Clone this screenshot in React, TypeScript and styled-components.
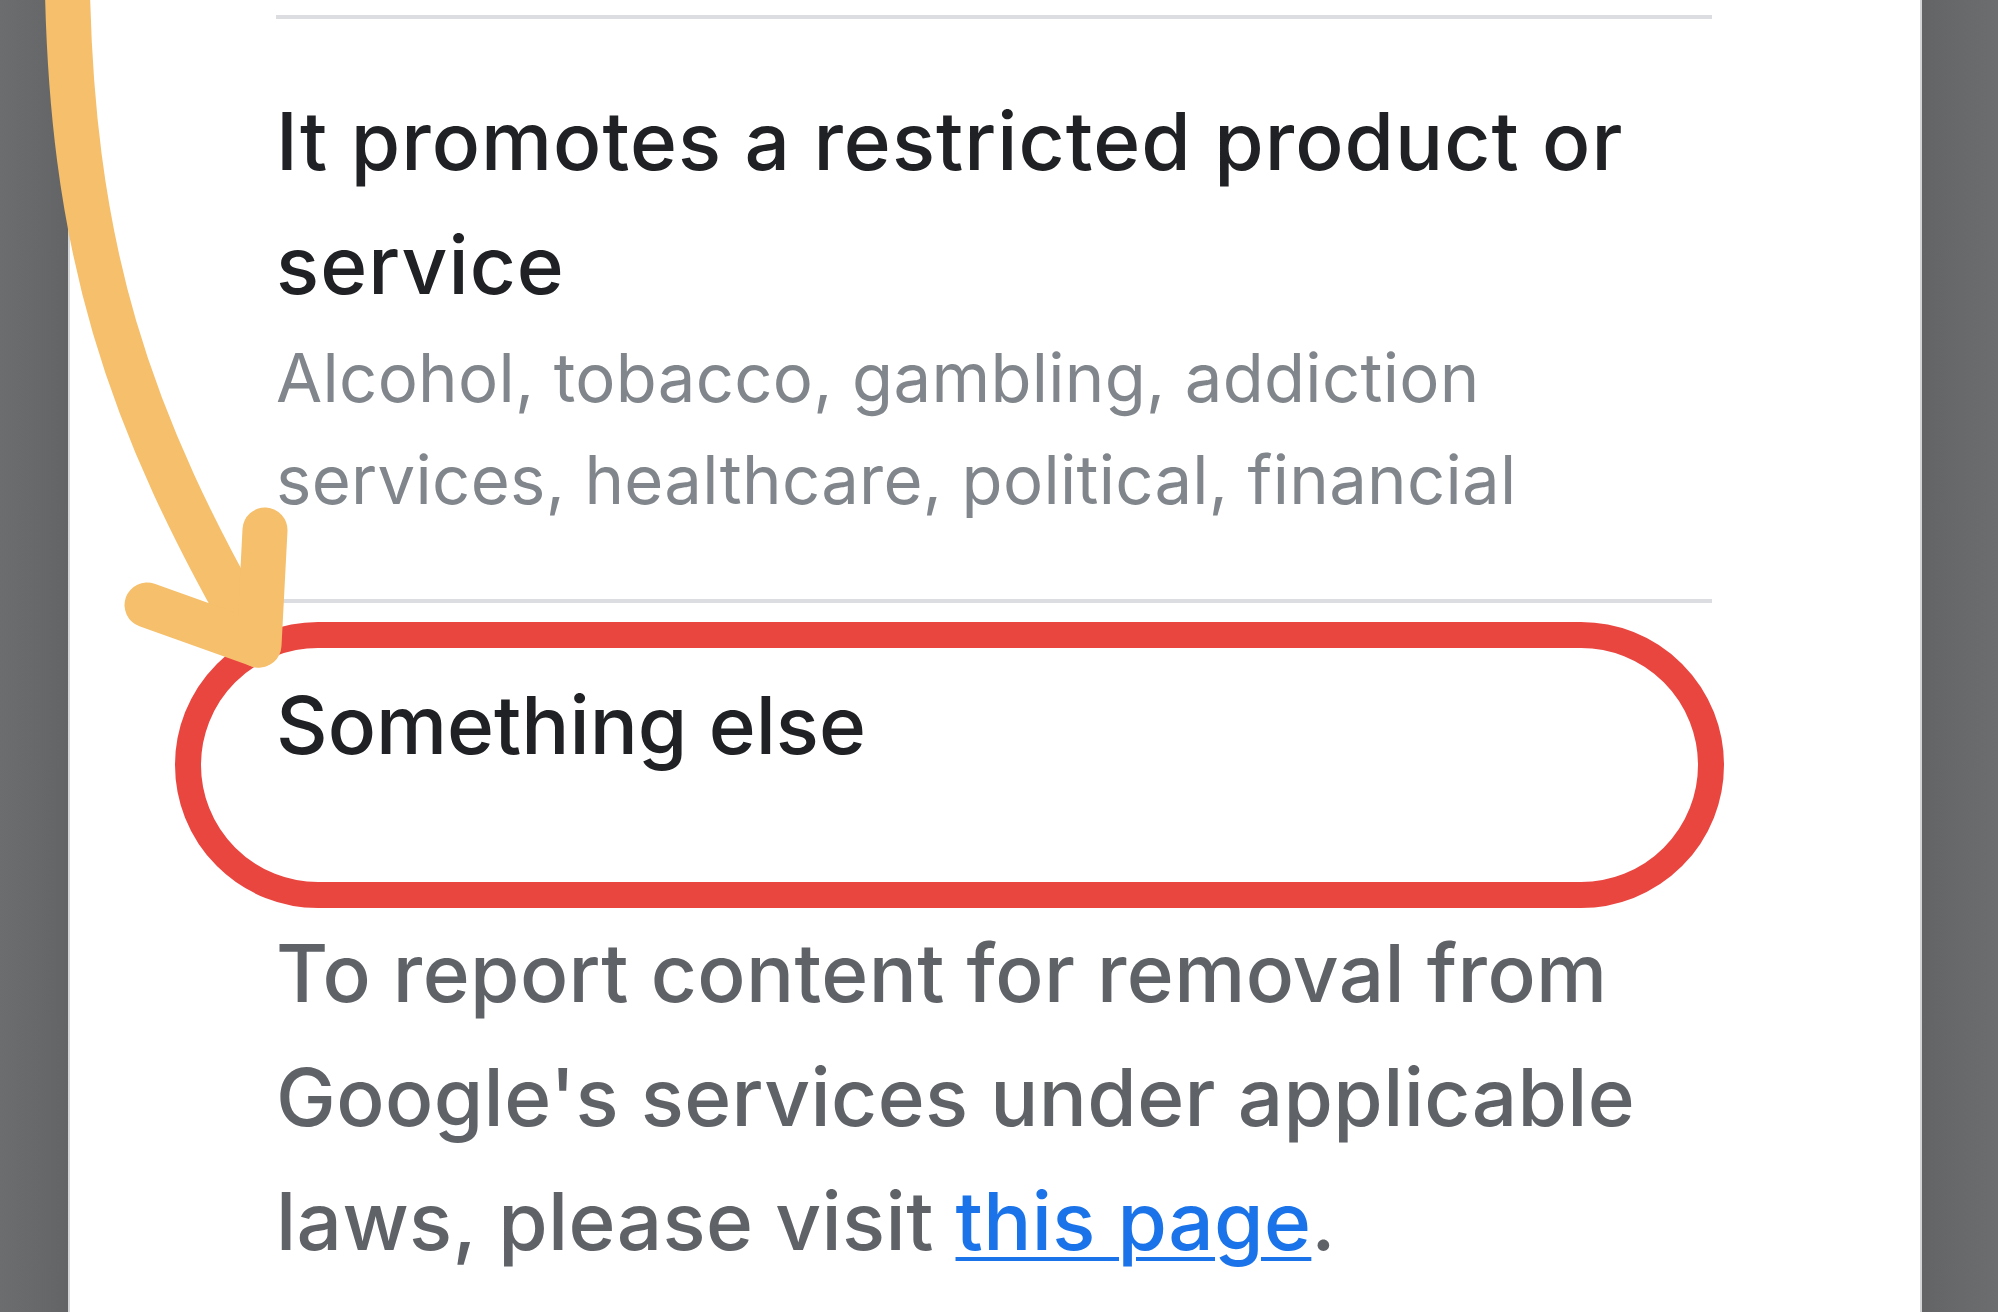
import React from "react";
import styled, { createGlobalStyle } from "styled-components";

const GlobalStyle = createGlobalStyle`
  html, body {
    margin: 0;
    padding: 0;
    background: #ffffff;
  }
  body {
    font-family: "Inter", "Noto Sans", sans-serif;
    -webkit-font-smoothing: antialiased;
  }
`;

const Page = styled.div`
  position: relative;
  display: flex;
  width: 1998px;
  height: 1312px;
  overflow: hidden;
  background: #ffffff;
`;

const Gutter = styled.div<{ $w: number; $edge: "left" | "right" }>`
  flex: 0 0 ${(p) => p.$w}px;
  background: linear-gradient(
    ${(p) => (p.$edge === "left" ? "90deg" : "270deg")},
    #6c6d6f 0%,
    #67686a 60%,
    #636466 100%
  );
  ${(p) =>
    p.$edge === "left"
      ? "border-right: 2px solid #d4d5d6;"
      : "border-left: 2px solid #d4d5d6;"}
  box-sizing: border-box;
`;

const Sheet = styled.main`
  flex: 1 1 auto;
  background: #ffffff;
  padding-left: 206px;
`;

const Content = styled.div`
  width: 1436px;
  display: flex;
  flex-direction: column;
`;

const Divider = styled.hr<{ $top?: number }>`
  margin: ${(p) => p.$top ?? 0}px 0 0 0;
  height: 4px;
  border: none;
  background: #dcdde0;
`;

const Option = styled.section<{ $padTop: number; $padBottom: number }>`
  position: relative;
  padding: ${(p) => p.$padTop}px 0 ${(p) => p.$padBottom}px 0;
`;

const Title = styled.h2<{ $spacing: number }>`
  margin: 0;
  font-family: "Inter", "Noto Sans", sans-serif;
  font-size: 80px;
  line-height: 124px;
  font-weight: 500;
  color: #202124;
  letter-spacing: ${(p) => p.$spacing}px;
`;

const Subtitle = styled.p`
  margin: 0;
  font-family: "Inter", "Noto Sans", sans-serif;
  font-size: 67px;
  line-height: 102px;
  font-weight: 400;
  color: #80868b;
  letter-spacing: 0.3px;
`;

const Body = styled.p`
  margin: 0;
  font-family: "Inter", "Noto Sans", sans-serif;
  font-size: 80px;
  line-height: 124px;
  font-weight: 500;
  color: #5f6368;
  letter-spacing: 0.4px;
`;

const Link = styled.a`
  color: #1a73e8;
  text-decoration: underline;
  text-decoration-thickness: 4px;
  text-underline-offset: 7px;
`;

const Highlight = styled.div`
  position: absolute;
  top: 19px;
  left: -101px;
  width: 1549px;
  height: 286px;
  box-sizing: border-box;
  border: 26px solid #ea4640;
  border-radius: 143px;
  pointer-events: none;
`;

const ArrowLayer = styled.svg`
  position: absolute;
  left: 0;
  top: 0;
  z-index: 2;
  pointer-events: none;
`;

function Arrow() {
  return (
    <ArrowLayer width="320" height="720" viewBox="0 0 320 720">
      <g
        fill="none"
        stroke="#f5bf6b"
        strokeWidth="45"
        strokeLinecap="round"
        strokeLinejoin="round"
      >
        <path d="M 67 -40 C 69 250, 128 420, 258 645" />
        <path d="M 265 530 L 259 645 L 147 605" />
      </g>
    </ArrowLayer>
  );
}

export default function App() {
  return (
    <>
      <GlobalStyle />
      <Page>
        <Gutter $w={70} $edge="left" />
        <Sheet>
          <Content>
            <Divider $top={15} />
            <Option $padTop={60} $padBottom={68}>
              <Title $spacing={1.05}>
                It promotes a restricted product or service
              </Title>
              <Subtitle>
                Alcohol, tobacco, gambling, addiction services, healthcare,
                political, financial
              </Subtitle>
            </Option>
            <Divider />
            <Option $padTop={60} $padBottom={124}>
              <Title $spacing={0}>Something else</Title>
              <Highlight />
            </Option>
            <Body>
              To report content for removal from Google's services under
              applicable laws, please visit <Link href="#">this page</Link>.
            </Body>
          </Content>
        </Sheet>
        <Gutter $w={78} $edge="right" />
        <Arrow />
      </Page>
    </>
  );
}
